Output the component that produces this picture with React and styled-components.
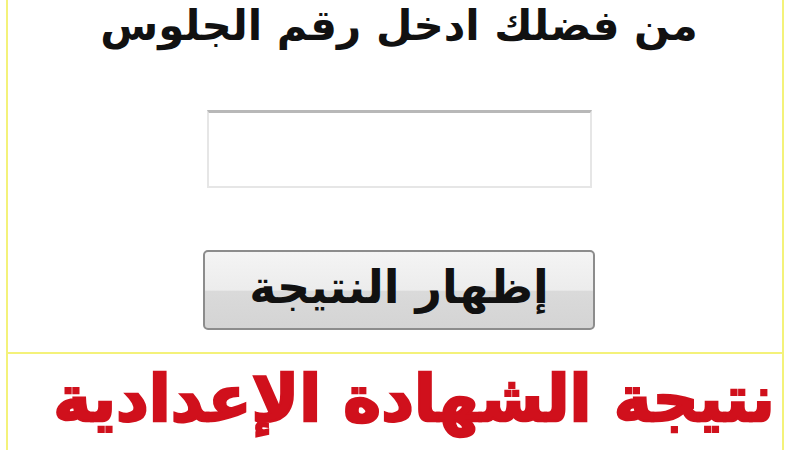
import React from "react";
import styled, { createGlobalStyle } from "styled-components";

const Global = createGlobalStyle`
  html, body { margin: 0; padding: 0; background: #ffffff; }
  body { width: 800px; height: 450px; overflow: hidden; }
`;

const Page = styled.div`
  width: 800px;
  height: 450px;
  overflow: hidden;
  padding: 0 16px 0 6px;
  box-sizing: border-box;
  direction: rtl;
`;

const Frame = styled.div`
  height: 100%;
  border-left: 2px solid #f4f27a;
  border-right: 2px solid #f4f27a;
  display: flex;
  flex-direction: column;
`;

const FormPanel = styled.section`
  height: 354px;
  padding-left: 8px;
  border-bottom: 2px solid #f4f27a;
  box-sizing: border-box;
  display: flex;
  flex-direction: column;
  align-items: center;
  overflow: hidden;
`;

const Prompt = styled.h1`
  margin: -2px 0 0 0;
  font-family: "DejaVu Sans", "Liberation Sans", sans-serif;
  font-weight: bold;
  font-size: 42px;
  line-height: 56px;
  letter-spacing: -0.3px;
  color: #111;
`;

const SeatInput = styled.input`
  margin-top: 56px;
  width: 385px;
  height: 78px;
  box-sizing: border-box;
  border: 2px solid #e6e6e6;
  border-top: 3px solid #b8b8b8;
  background: #fff;
`;

const ShowButton = styled.button`
  margin-top: 62px;
  width: 392px;
  height: 80px;
  box-sizing: border-box;
  border: 2px solid #8c8c8c;
  border-radius: 5px;
  background: linear-gradient(#f4f4f4 0%, #ececec 50%, #dadada 52%, #d4d4d4 100%);
  font-family: "DejaVu Sans", "Liberation Sans", sans-serif;
  font-weight: bold;
  font-size: 46px;
  color: #111;
  padding: 0 0 6px 0;
  direction: rtl;
`;

const BannerPanel = styled.section`
  flex: 1;
  padding-left: 38px;
  display: flex;
  justify-content: center;
  align-items: flex-start;
  overflow: hidden;
`;

const Banner = styled.h2`
  margin: 0;
  font-family: "DejaVu Sans", "Liberation Sans", sans-serif;
  font-weight: 900;
  font-size: 64px;
  line-height: 90px;
  color: #d0101c;
  -webkit-text-stroke: 2.5px #d0101c;
  white-space: nowrap;
`;

export default function App() {
  return (
    <>
      <Global />
      <Page>
        <Frame>
          <FormPanel>
            <Prompt>من فضلك ادخل رقم الجلوس</Prompt>
            <SeatInput type="text" />
            <ShowButton type="button">إظهار النتيجة</ShowButton>
          </FormPanel>
          <BannerPanel>
            <Banner>نتيجة الشهادة الإعدادية</Banner>
          </BannerPanel>
        </Frame>
      </Page>
    </>
  );
}
